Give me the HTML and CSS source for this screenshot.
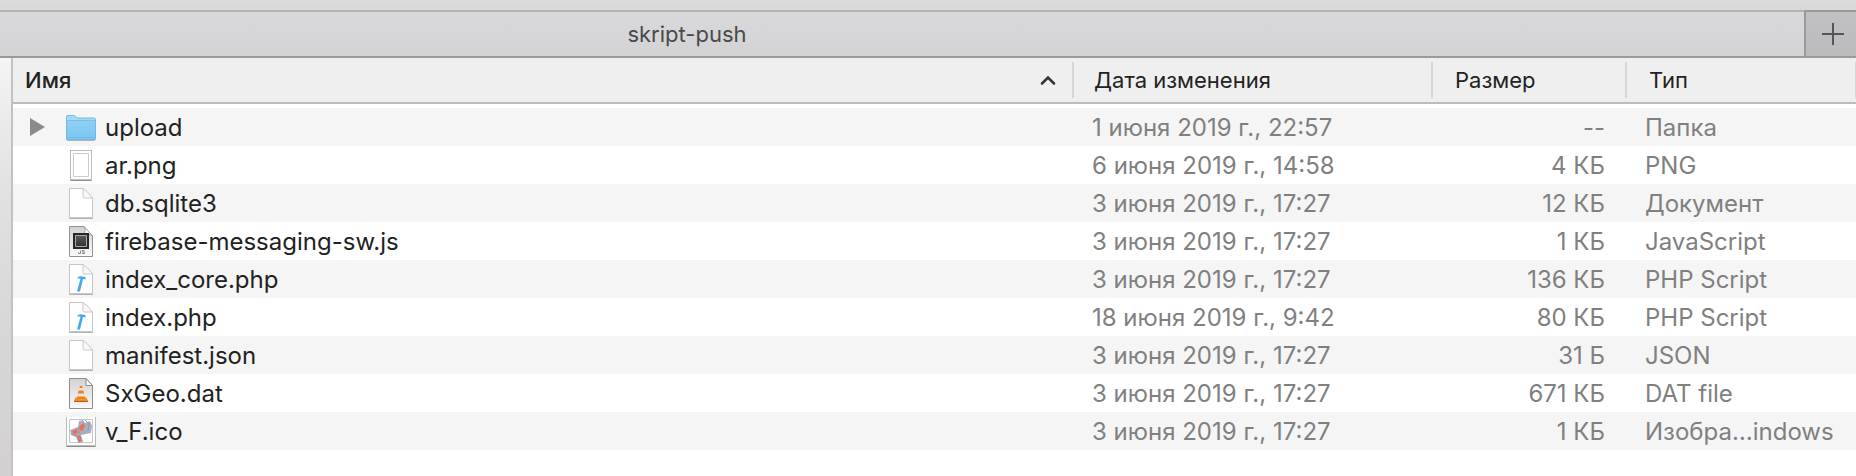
FILE: index.html
```html
<!DOCTYPE html>
<html lang="ru">
<head>
<meta charset="utf-8">
<title>skript-push</title>
<link rel="stylesheet" href="styles.css">
</head>
<body>
<svg class="defs" aria-hidden="true">
  <defs>
    <linearGradient id="folder-fill" x1="0" y1="0" x2="0" y2="1"><stop offset="0" stop-color="#8fd0f8"/><stop offset="1" stop-color="#7cc6f3"/></linearGradient>
    <linearGradient id="gray-fill" x1="0" y1="0" x2="0" y2="1"><stop offset="0" stop-color="#d2d2d2"/><stop offset="1" stop-color="#fafafa"/></linearGradient>
    <linearGradient id="screen-fill" x1="0" y1="0" x2="0" y2="1"><stop offset="0" stop-color="#5a5a5a"/><stop offset="1" stop-color="#303030"/></linearGradient>
    <symbol id="page" viewBox="0 0 32 32">
      <path d="M4.5 1.5H18L27.500 11V30.500H4.500Z" fill="#fff" stroke="#c6c6c6"/>
      <path d="M4 31.500H28" stroke="#b4b4b4" fill="none"/>
      <path d="M18 1.500V9.500Q18 11 19.500 11H27.500Q22.500 4 18 1.500Z" fill="#f7f7f7" stroke="#c9c9c9"/>
    </symbol>
    <symbol id="hammer-page" viewBox="0 0 32 32">
      <use href="#page"/>
      <path d="M12 15.500Q13.500 12.500 17 13.500L20.500 14V16.500L18 16L15 28.500H12L15.500 15.500Z" fill="#42a9f0"/>
    </symbol>
  </defs>
</svg>
<div class="window">
  <div class="toolbar-edge"></div>
  <nav class="tabs">
    <button class="tab" type="button">skript-push</button>
    <button class="add-tab" type="button" aria-label="Новая вкладка">
      <svg width="22" height="22" viewBox="0 0 22 22"><path d="M11 0V22M0 11H22" stroke="#555" stroke-width="2"/></svg>
    </button>
  </nav>
  <div class="content">
    <aside class="sidebar"></aside>
    <main class="list">
      <table class="files">
        <colgroup><col><col class="col-date"><col class="col-size"><col class="col-type"></colgroup>
        <thead>
          <tr>
            <th aria-sort="ascending"><button class="sort sort-active" type="button">Имя
              <svg width="16" height="10" viewBox="0 0 16 10"><path d="M2 8.500L8 2.500L14 8.500" fill="none" stroke="#333" stroke-width="2.500" stroke-linecap="round"/></svg></button></th>
            <th><button class="sort" type="button">Дата изменения</button></th>
            <th><button class="sort sort-wide" type="button">Размер</button></th>
            <th><button class="sort sort-wide sort-last" type="button">Тип</button></th>
          </tr>
        </thead>
        <tbody>
          <tr>
            <td><div class="name"><button class="expand" type="button" aria-label="Раскрыть upload"><svg width="16" height="18" viewBox="0 0 16 18"><path d="M1 0L16 9L1 18Z" fill="#8b8b8b"/></svg></button>
              <svg class="icon" viewBox="0 0 32 32"><path d="M1.500 28.500V6Q1.500 4.500 3 4.500H9.500L12 7H29Q30.500 7 30.500 8.500V28.500Z" fill="#a2dafa" stroke="#76b8df"/><path d="M2 9.500H30V27Q30 28 29 28H3Q2 28 2 27Z" fill="url(#folder-fill)"/><path d="M1.500 9.500H30.500M2 26.500H30" stroke="#6fb5df" fill="none" opacity=".7"/><path d="M2 29.500H30" stroke="#a9b5bc"/></svg>
              <span class="label">upload</span></div></td>
            <td>1 июня 2019 г., 22:57</td><td class="size">--</td><td>Папка</td>
          </tr>
          <tr>
            <td><div class="name"><span class="expand"></span>
              <svg class="icon" viewBox="0 0 32 32"><path d="M5 1H27V32H5Z" fill="#bbb"/><path d="M6 31.500H26" stroke="#929292"/><path d="M6 2H26V30H6Z" fill="#fff"/><path d="M8.500 4.500H23.500V27.500H8.500Z" fill="none" stroke="#ccc"/></svg>
              <span class="label">ar.png</span></div></td>
            <td>6 июня 2019 г., 14:58</td><td class="size">4 КБ</td><td>PNG</td>
          </tr>
          <tr>
            <td><div class="name"><span class="expand"></span><svg class="icon"><use href="#page"/></svg><span class="label">db.sqlite3</span></div></td>
            <td>3 июня 2019 г., 17:27</td><td class="size">12 КБ</td><td>Документ</td>
          </tr>
          <tr>
            <td><div class="name"><span class="expand"></span>
              <svg class="icon" viewBox="0 0 32 32"><path d="M4.500 1.500H19L27.500 11V31.500H4.500Z" fill="url(#gray-fill)" stroke="#929292"/><path d="M19 1.500Q21 5 19.500 9Q24 8 27.500 11Z" fill="#fafafa" stroke="#aaa"/><path d="M8 8H24V24H8Z" fill="#262626"/><path d="M10.500 10.500H21.500V21.500H10.500Z" fill="url(#screen-fill)" stroke="#aaa"/><path d="M15.500 25.500V28.500H13.500V27.500M19.500 25.500H17.500V27H19.500V28.500H17" fill="none" stroke="#888"/></svg>
              <span class="label">firebase-messaging-sw.js</span></div></td>
            <td>3 июня 2019 г., 17:27</td><td class="size">1 КБ</td><td>JavaScript</td>
          </tr>
          <tr>
            <td><div class="name"><span class="expand"></span><svg class="icon"><use href="#hammer-page"/></svg><span class="label">index_core.php</span></div></td>
            <td>3 июня 2019 г., 17:27</td><td class="size">136 КБ</td><td>PHP Script</td>
          </tr>
          <tr>
            <td><div class="name"><span class="expand"></span><svg class="icon"><use href="#hammer-page"/></svg><span class="label">index.php</span></div></td>
            <td>18 июня 2019 г., 9:42</td><td class="size">80 КБ</td><td>PHP Script</td>
          </tr>
          <tr>
            <td><div class="name"><span class="expand"></span><svg class="icon"><use href="#page"/></svg><span class="label">manifest.json</span></div></td>
            <td>3 июня 2019 г., 17:27</td><td class="size">31 Б</td><td>JSON</td>
          </tr>
          <tr>
            <td><div class="name"><span class="expand"></span>
              <svg class="icon" viewBox="0 0 32 32"><path d="M4.500 1.500H21L27.500 8.500V31.500H4.500Z" fill="url(#gray-fill)" stroke="#8e8e8e"/><path d="M21 1.500V8.500H27.500Z" fill="#fff" stroke="#888"/><path d="M10.500 20.500H21.500L23 24H9Z" fill="#f08a1c"/><path d="M9 24.500H23" stroke="#c05e10"/><path d="M15 9H17L20.500 21.500Q16 24 11.500 21.500Z" fill="#e9e7e5"/><path d="M15 9H17L17.600 11H14.400ZM13.700 13.500H18.300L19.200 16.500H12.800ZM12 19.500H20L20.500 21.500Q16 24 11.500 21.500Z" fill="#ee7f16"/></svg>
              <span class="label">SxGeo.dat</span></div></td>
            <td>3 июня 2019 г., 17:27</td><td class="size">671 КБ</td><td>DAT file</td>
          </tr>
          <tr>
            <td><div class="name"><span class="expand"></span>
              <svg class="icon" viewBox="0 0 32 32"><path d="M1 2H31V32H1Z" fill="#bcbcbc"/><path d="M2 31.500H30" stroke="#8c8c8c"/><path d="M2 2H30V30H2Z" fill="#fff"/><path d="M4.500 4.500H27.500V27.500H4.500Z" fill="#fff" stroke="#c5c5cb"/><path d="M5 15L13 12L14 6L18 5L20 8L25 6L27 11L26 18L21 19L16 20L18 27L14 28L11 22L6 20Z" fill="#a6b0bc"/><path d="M7 16L12 14L13 18L9 20ZM14 12L18 8L20 11L18 15L15 16ZM12 21L15 20L17 26L14 27Z" fill="#ef6b5f"/><path d="M20 5L24 9L23 16M13 13L15 19M6 19L12 21L14 28" fill="none" stroke="#8f9baa"/></svg>
              <span class="label">v_F.ico</span></div></td>
            <td>3 июня 2019 г., 17:27</td><td class="size">1 КБ</td><td>Изобра…indows</td>
          </tr>
        </tbody>
      </table>
    </main>
  </div>
</div>
</body>
</html>
```
FILE: styles.css
```css
* { box-sizing: border-box; }
body {
  margin: 0;
  background: #fff;
  color: #222;
  font: 24px/36px Inter, "Noto Sans", sans-serif;
}
button {
  margin: 0;
  padding: 0;
  border: 0;
  background: none;
  color: inherit;
  font: inherit;
}
svg { display: block; flex: none; }
.defs { position: absolute; width: 0; height: 0; }
.window { display: flex; flex-direction: column; min-height: 100vh; }
.toolbar-edge { height: 10px; background: linear-gradient(#dddbdd, #d9d9d9); }
.tabs {
  display: flex;
  height: 48px;
  border-bottom: 2px solid #9a9a9a;
}
.tab {
  flex: 1;
  padding-right: 430px;
  border-top: 2px solid #b3b3b3;
  background: linear-gradient(#d9d8da, #d3d2d4);
  color: #4a4a4a;
  font-size: 22px;
}
.add-tab {
  display: flex;
  align-items: center;
  width: 52px;
  padding-left: 16px;
  border-top: 2px solid #9a9a9a;
  border-left: 2px solid #9a9a9a;
  background: linear-gradient(#c1c0c2, #bbbabc);
}
.content { display: flex; flex: 1; }
.sidebar {
  width: 13px;
  border-right: 2px solid #c2c2c2;
  background: linear-gradient(#f4f4f4, #e2e2e2 30%, #d8d8d8 60%, #d2d1cf);
}
.list { flex: 1; min-width: 0; }
.files {
  width: 100%;
  table-layout: fixed;
  border-collapse: separate;
  border-spacing: 0;
}
.col-date { width: 359px; }
.col-size { width: 194px; }
.col-type { width: 231px; }
th {
  height: 46px;
  padding: 0;
  border-bottom: 2px solid #bcbcbc;
  background: #efefef;
  font-weight: 400;
}
.sort {
  display: flex;
  align-items: center;
  width: 100%;
  height: 36px;
  padding-left: 20px;
  border-left: 2px solid #d6d6d6;
  font-size: 22px;
}
.sort-active {
  justify-content: space-between;
  padding: 0 16px 0 12px;
  border-left: 0;
  font-weight: 500;
}
.sort-wide { padding-left: 22px; }
.sort-last { border-right: 1px solid #d6d6d6; }
tbody::before { content: ""; display: block; height: 4px; }
tbody tr:nth-child(odd) { background: #f5f5f5; }
td {
  height: 38px;
  padding: 2px 0 0 20px;
  color: #808080;
  white-space: nowrap;
}
td:first-child { padding: 0 0 0 16px; }
td.size { padding: 2px 20px 0 0; text-align: right; }
.name { display: flex; align-items: center; height: 38px; color: #222; }
.expand { width: 16px; margin-right: 20px; }
.icon { width: 32px; height: 32px; margin-right: 8px; }
.label { padding-top: 2px; }
```
